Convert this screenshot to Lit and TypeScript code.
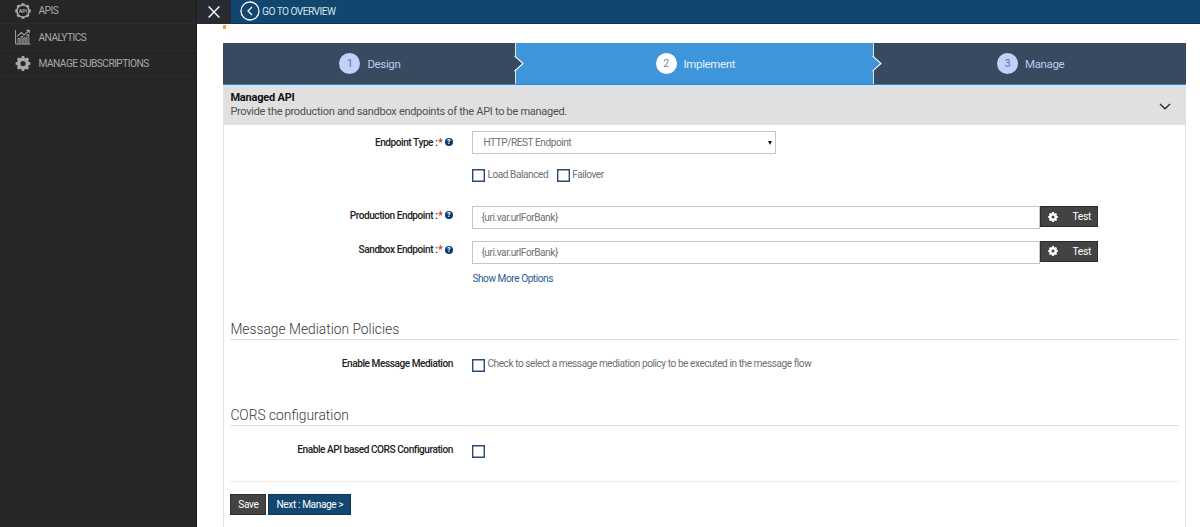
import { LitElement, html, css, svg } from "lit";
import { customElement, property } from "lit/decorators.js";

const gearPath = (cx: number, cy: number, outer: number, inner: number, teeth = 8) => {
  const pts: string[] = [];
  const step = (Math.PI * 2) / teeth;
  for (let i = 0; i < teeth; i++) {
    const a = i * step - Math.PI / 2;
    for (const [off, r] of [[-0.32, inner], [-0.22, outer], [0.22, outer], [0.32, inner]]) {
      pts.push(`${(cx + r * Math.cos(a + off * step)).toFixed(2)} ${(cy + r * Math.sin(a + off * step)).toFixed(2)}`);
    }
  }
  return `M${pts.join("L")}Z`;
};

const gearIcon = (size: number, hole: number) => html`<svg width=${size} height=${size} viewBox="0 0 16 16">
  <path fill="currentColor" fill-rule="evenodd"
    d="${gearPath(8, 8, 8, 6.4)}M${8 - hole} 8a${hole} ${hole} 0 1 0 ${hole * 2} 0a${hole} ${hole} 0 1 0 ${-hole * 2} 0Z" />
</svg>`;

const apiIcon = html`<svg width="16" height="16" viewBox="0 0 16 16">
  <path fill="currentColor" fill-rule="evenodd"
    d="${gearPath(8, 8, 7.9, 6.8)}M2.7 8a5.3 5.3 0 1 0 10.6 0a5.3 5.3 0 1 0 -10.6 0Z" />
  <text x="8" y="9.9" text-anchor="middle" font-family="Roboto, sans-serif" font-size="5.4" font-weight="700" letter-spacing="0" fill="currentColor">API</text>
</svg>`;

const chartIcon = html`<svg width="16" height="16" viewBox="0 0 16 16" fill="none" stroke="currentColor">
  <path d="M.6 1v14h14.8" stroke-width="1" />
  ${[3.2, 6.2, 9.2, 12.2].map((x, i) => svg`<path d="M${x - 0.2} 14.6V${[9.5, 7.5, 8.8, 5.6][i]}h1.8V14.6" stroke-width=".9" />`)}
  <path d="M2.3 7.4 6.4 3.6 9 6.1 14 1.6M11.2 1.3h3.1v3" stroke-width="1.1" />
</svg>`;

@customElement("side-nav")
class SideNav extends LitElement {
  static styles = css`
    :host { display: block; width: 197px; flex: none; background: #262626; color: #a9a9a9; box-shadow: inset -1px 0 #1b1b1f; }
    .item { display: flex; align-items: center; height: 26.4px; box-sizing: border-box; padding-left: 14.5px; border-bottom: 1px solid #2b2b32; font-size: 10.2px; gap: 8px; }
    .item span { letter-spacing: -0.55px; }
    .item:first-child { height: 24.4px; padding-bottom: 2px; }
    svg { display: block; width: 16px; }
  `;
  render() {
    return html`
      <div class="item">${apiIcon}<span>APIS</span></div>
      <div class="item">${chartIcon}<span>ANALYTICS</span></div>
      <div class="item">${gearIcon(15, 2.8)}<span>MANAGE SUBSCRIPTIONS</span></div>`;
  }
}

@customElement("step-bar")
class StepBar extends LitElement {
  static styles = css`
    :host { display: grid; grid-template-columns: 293px 358px 1fr; height: 41px; border-bottom: 1.5px solid #2191e8; letter-spacing: -0.36px; }
    .step { position: relative; display: flex; align-items: center; justify-content: center; gap: 7px; background: #39495f; color: #b9cbef; font-size: 11.5px; box-sizing: border-box; padding-left: 1px; }
    .step:not(:last-child) { border-right: 1px solid #dce6ee; }
    .active { background: #3e95d9; color: #e4f1fc; }
    .num { width: 21px; height: 21px; border-radius: 50%; background: #c1d1fc; color: #5d6f92; display: flex; align-items: center; justify-content: center; font-size: 10.5px; }
    .active .num { background: #fff; color: #6d8bb0; }
    .tip { position: absolute; right: -9px; top: 12px; z-index: 1; }
  `;
  render() {
    return html`${["Design", "Implement", "Manage"].map((name, i) => html`
      <div class="step ${i === 1 ? "active" : ""}">
        <span class="num">${i + 1}</span><span>${name}</span>
        ${i < 2 ? html`<svg class="tip" width="10" height="17" viewBox="0 0 10 17">
          <path d="M0 0.8 9 8.5 0 16.2Z" fill=${i ? "#3e95d9" : "#39495f"} />
          <path d="M.5 0.8 9 8.5 .5 16.2" fill="none" stroke="#fff" stroke-width="1.1" /></svg>` : ""}
      </div>`)}`;
  }
}

@customElement("form-row")
class FormRow extends LitElement {
  @property() label = "";
  @property({ type: Boolean }) required = false;
  static styles = css`
    :host { display: grid; grid-template-columns: 229.5px 1fr; column-gap: 19.5px; align-items: start; }
    .label { display: flex; justify-content: flex-end; align-items: center; height: 22px; color: #222; font-weight: 500; white-space: pre; letter-spacing: -0.45px; }
    .star { color: #e02020; margin: 0 2.5px 0 1px; }
    .help { width: 8px; height: 8px; border-radius: 50%; background: #083a72; color: #fff; font-size: 7px; font-weight: 900; line-height: 8px; text-align: center; letter-spacing: 0; }
  `;
  render() {
    return html`<div class="label">${this.label}${this.required
      ? html` :<span class="star">*</span><span class="help">?</span>` : ""}</div><slot></slot>`;
  }
}

@customElement("app-root")
class AppRoot extends LitElement {
  static styles = css`
    :host { display: flex; width: 1200px; height: 527px; overflow: hidden; font-family: Roboto, sans-serif; color: #505050; background: #fff; font-size: 10.1px; letter-spacing: -0.44px; }
    .main { flex: 1; min-width: 0; }
    .top { display: flex; height: 24px; box-sizing: border-box; background: #11466f; border-bottom: 1px solid #0b3354; color: #d5e2ed; }
    .close { width: 34px; height: 24px; background: #282b32; display: flex; align-items: center; justify-content: center; }
    .back { display: flex; align-items: center; gap: 2px; padding: 0 0 1px 9px; font-size: 10.2px; letter-spacing: -0.55px; }
    .strip { height: 4px; margin: 1px 0 14px 26px; background: #fcfcfc; border-left: 3px solid #eda22f; }
    .card { margin: 0 14px 0 26.4px; }
    .head { display: flex; justify-content: space-between; align-items: center; height: 39.5px; box-sizing: border-box; padding: 0 15px 0 7px; background: #e0e0e0; font-size: 11px; line-height: 14px; letter-spacing: -0.29px; }
    .head svg { margin-top: 3px; }
    .title { font-weight: 700; color: #111; font-size: 11px; letter-spacing: -0.2px; }
    .body { border: solid #e2e2e2; border-width: 0 1px; height: 404px; padding-top: 6.5px; box-sizing: border-box; }
    form-row { margin-left: -1px; }
    .box { height: 23px; box-sizing: border-box; border: 1px solid #c6c6c6; display: flex; align-items: center; color: #707070; padding: 0 8px; }
    .select { width: 303.5px; justify-content: space-between; padding: 0 3px 0 10px; }
    .arrow { width: 0; border: 2px solid transparent; border-top: 4px solid #111; border-bottom: 0; }
    .checks { display: flex; gap: 9px; margin: 14px 0 0 248px; height: 14px; }
    .check { display: flex; gap: 2px; line-height: 13px; color: #707070; }
    .check i { width: 13px; height: 13px; box-sizing: border-box; border: 1.5px solid #2c4a70; margin-top: 1px; box-shadow: inset 0 0 0 .4px #2c4a70; }
    .endpoint { display: flex; }
    .endpoint .box { width: 568px; margin-top: 2px; }
    .test { width: 58px; height: 21px; margin-top: 2px; background: #434343; border: 1px solid #2b2b2b; box-sizing: border-box; color: #fff; display: flex; align-items: center; gap: 14px; padding-left: 7px; font-size: 10.3px; letter-spacing: -0.3px; }
    .prod { margin-top: 22px; }
    .sand { margin-top: 9.5px; }
    .more { display: block; margin: 9px 0 0 248px; line-height: 12px; color: #2a5d92; }
    .section { margin: 31px 6px 0; height: 24px; box-sizing: border-box; border-bottom: 1px solid #ddd; color: #3a3a3a; font-size: 13.8px; font-weight: 300; letter-spacing: 0; line-height: 26px; }
    .cors { margin-top: 27px; }
    .opt { margin-top: 13px; }
    .opt .check { margin: 4px 0 0 0; }
    .opt .check i { margin-top: 2px; }
    .foot { margin: 20px 6px 0; border-top: 1px solid #eee; padding-top: 12.5px; display: flex; gap: 2px; }
    .btn { height: 21px; box-sizing: border-box; background: #434343; border: 1px solid #2e2e2e; color: #fff; display: flex; align-items: center; justify-content: center; width: 36px; letter-spacing: -0.38px; }
    .next { width: 83px; background: #14476f; border-color: #0b385d; }
  `;

  private endpoint(label: string, cls: string) {
    return html`<form-row class=${cls} label=${label} required>
      <div class="endpoint">
        <div class="box">{uri.var.urlForBank}</div>
        <div class="test">${gearIcon(10, 2.4)}<span>Test</span></div>
      </div></form-row>`;
  }

  render() {
    return html`
      <side-nav></side-nav>
      <div class="main">
        <div class="top">
          <div class="close"><svg width="12" height="12" viewBox="0 0 12 12"><path d="M.6.6l10.8 10.8M11.4.6.6 11.4" stroke="#fff" stroke-width="1.4" /></svg></div>
          <div class="back"><svg width="20" height="20" viewBox="0 0 20 20" fill="none" stroke="#fff"><circle cx="10" cy="10" r="9" stroke-width="1.3" /><path d="M12 6 8 10l4 4" stroke-width="1.3" /></svg><span>GO TO OVERVIEW</span></div>
        </div>
        <div class="strip"></div>
        <div class="card">
          <step-bar></step-bar>
          <div class="head">
            <div><div class="title">Managed API</div><div>Provide the production and sandbox endpoints of the API to be managed.</div></div>
            <svg width="12" height="7" viewBox="0 0 12 7"><path d="M1 1l5 4.8L11 1" fill="none" stroke="#222" stroke-width="1.2" /></svg>
          </div>
          <div class="body">
            <form-row label="Endpoint Type" required><div class="box select">HTTP/REST Endpoint<span class="arrow"></span></div></form-row>
            <div class="checks"><div class="check"><i></i>Load Balanced</div><div class="check"><i></i>Failover</div></div>
            ${this.endpoint("Production Endpoint", "prod")}
            ${this.endpoint("Sandbox Endpoint", "sand")}
            <span class="more">Show More Options</span>
            <div class="section">Message Mediation Policies</div>
            <form-row class="opt" label="Enable Message Mediation"><div class="check"><i></i>Check to select a message mediation policy to be executed in the message flow</div></form-row>
            <div class="section cors">CORS configuration</div>
            <form-row class="opt" label="Enable API based CORS Configuration"><div class="check"><i></i></div></form-row>
            <div class="foot"><div class="btn">Save</div><div class="btn next">Next : Manage &gt;</div></div>
          </div>
        </div>
      </div>`;
  }
}
